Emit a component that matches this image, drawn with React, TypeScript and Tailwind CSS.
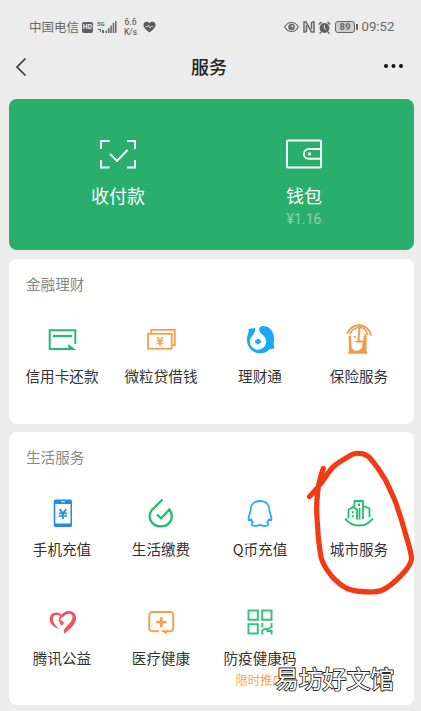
import type { ReactNode } from "react";

const CJK = `font-['Noto_Sans_CJK_SC','Noto_Sans',sans-serif]`;

export default function App() {
  return (
    <main className={`relative h-[711px] w-[421px] overflow-hidden bg-[#ececec] text-[#333] ${CJK}`}>
      <StatusBar />

      <header className="flex h-[45px] items-center justify-between pr-[17px] pl-[15px]">
        <svg width="12" height="20" viewBox="0 0 12 20" fill="none" stroke="#333" strokeWidth="1.6"><path d="M10.500 1.500 2 10l8.500 8.500" /></svg>
        <h1 className="mt-[-2px] ml-[8px] text-[18px] font-medium leading-none text-[#222]">服务</h1>
        <svg className="mt-[-2px]" width="21" height="6" viewBox="0 0 21 6" fill="#111"><circle cx="3" cy="3" r="2" /><circle cx="10.5" cy="3" r="2" /><circle cx="18" cy="3" r="2" /></svg>
      </header>

      <section className="mt-[10px] mr-[7px] ml-[9px] flex h-[151px] rounded-lg bg-[#2aae6b] pr-[17px] pl-4 text-white">
        <div className="flex w-1/2 flex-col items-center pt-[39px]">
          <svg width="38" height="32" viewBox="0 0 38 32" fill="none" stroke="#fff" strokeWidth="1.9">
            <path d="M2 11V3h8.500M28 3h8v8M36 22v7.500h-8M10.500 29.500H2V22" />
            <path d="m11 15.800 7 7L28.500 12" />
          </svg>
          <p className="mt-[12px] text-[18px] leading-[26px]">收付款</p>
        </div>
        <div className="flex w-1/2 flex-col items-center pt-[39px]">
          <svg width="38" height="32" viewBox="0 0 38 32" fill="none" stroke="#fff" strokeWidth="1.9">
            <rect x="2" y="2.500" width="34" height="27" rx="1" />
            <path d="M36 11H23.800a4.900 4.900 0 0 0 0 9.800H36" />
            <circle cx="24.500" cy="15.900" r="1.700" fill="#fff" stroke="none" />
          </svg>
          <p className="mt-[12px] text-[18px] leading-[26px]">钱包</p>
          <p className="mt-[3px] font-[Roboto,sans-serif] text-[14px] leading-[16px] tracking-[0.100px] text-[#8bd3ae]">¥1.16</p>
        </div>
      </section>

      <Panel title="金融理财" className="mt-[9px] h-[165px]">
        <Service label="信用卡还款" icon={<CardIcon />} />
        <Service label="微粒贷借钱" icon={<LoanIcon />} />
        <Service label="理财通" icon={<WealthIcon />} />
        <Service label="保险服务" icon={<InsuranceIcon />} />
      </Panel>

      <Panel title="生活服务" className="mt-2 h-[273px]">
        <Service label="手机充值" icon={<PhoneIcon />} />
        <Service label="生活缴费" icon={<UtilityIcon />} />
        <Service label="Q币充值" icon={<PenguinIcon />} />
        <Service label="城市服务" icon={<CityIcon />} />
        <Service label="腾讯公益" icon={<CharityIcon />} />
        <Service label="医疗健康" icon={<MedicalIcon />} />
        <Service label="防疫健康码" icon={<CodeIcon />} note="限时推广" />
      </Panel>

      {/* hand-drawn marker around the city services entry */}
      <svg className="pointer-events-none absolute left-0 top-0" width="421" height="711" viewBox="0 0 421 711" fill="none" stroke="#f23a14" strokeWidth="5.200" strokeLinecap="round" strokeLinejoin="round">
        <path d="M309.500 496.500C315 491 319 486 323.500 480C328 473 331 468 336 464.500C341 460.500 344 459.500 348 456.800C352 454 354 453 358.500 453.300C364 453.300 367 454.500 370 458C376 465 381 472 385.500 480C390 489 392 494 395.500 502C399 512 402 521 405 532C408 543 411 551 411.500 558C411.500 563 409 566 406 570C400 577 394 583 387 587.500C382 591 379 591.500 372 592C364 592 354 591.500 347 588.500C341 585.500 336 581 331.500 576C326 569 322.500 564 321 557C319 545 318 537 317.700 528C317 517 316 509 317 500C317.500 488 319.500 479 323.300 468.500" />
      </svg>

      <p className="absolute left-[275px] top-[663px] whitespace-nowrap text-[23.800px] font-normal leading-[29px] text-white [-webkit-text-stroke:1.800px_#2a2a2a] [paint-order:stroke_fill]">易坊好文馆</p>
    </main>
  );
}

function StatusBar() {
  return (
    <div className="flex h-11 items-center pt-[10px] pl-[29px] text-[12.500px] leading-none text-[#686868]">
      <span>中国电信</span>
      <span className="ml-[3px] flex h-[11px] w-[11px] items-center justify-center rounded-[2px] bg-[#606060] font-[Roboto,sans-serif] text-[7px] font-bold text-[#eee]">HD</span>
      <svg className="ml-1" width="20" height="14" viewBox="0 0 20 14" fill="#666">
        <text x="0" y="6" fontSize="6" fontWeight="700" fontFamily="Roboto">5G</text>
        <path d="M1 9h3v3H3v-2H1zM5 10h2v3H5zM8.500 10.500h1.500V13H8.500zM11 8h1.500v5H11zM13.300 5.500h1.500V13h-1.500zM15.700 3h1.500v10h-1.500zM18 1h1.500v12H18z" />
      </svg>
      <span className="ml-[6px] flex w-[15px] flex-col items-center font-[Roboto,sans-serif] text-[8.500px] font-medium leading-[10px]"><span>6.6</span><span>K/s</span></span>
      <svg className="ml-[5px]" width="13" height="12" viewBox="0 0 13 12">
        <path d="M6.500 11.500C1 7.500.5 5.600.5 3.800.5.200 5 0 6.500 2.200 8 0 12.500.2 12.500 3.800c0 1.800-.5 3.700-6 7.700Z" fill="#5c5c5c" />
        <path d="M2.500 5.500h2l1-1.500 1.500 3 1-1.500h2" fill="none" stroke="#ececec" strokeWidth=".8" />
      </svg>
      <svg className="ml-[128px]" width="15" height="12" viewBox="0 0 15 12" fill="none" stroke="#666" strokeWidth="1.200">
        <path d="M.8 6c3-6 10.400-6 13.400 0-3 6-10.400 6-13.400 0Z" /><circle cx="7.500" cy="6" r="2.700" fill="#777" /><circle cx="8.300" cy="5.100" r=".9" fill="#ececec" stroke="none" />
      </svg>
      <svg className="ml-1" width="12" height="12" viewBox="0 0 12 12" fill="none" stroke="#666" strokeWidth="1.500">
        <path d="M3 11H1V1h2l5.500 10H11V1H9M3.500 4v7M8.500 1v7" />
      </svg>
      <svg className="ml-[3px]" width="13" height="13" viewBox="0 0 13 13">
        <circle cx="6.500" cy="7" r="4.900" fill="#606060" />
        <path d="M.8 3.500 3.500 1M12.200 3.500 9.500 1M3 11l-1.300 1.500M10 11l1.300 1.500" stroke="#606060" strokeWidth="1.500" />
        <path d="M6.300 4v3.300l2.200 1.500" fill="none" stroke="#ececec" strokeWidth="1" />
      </svg>
      <span className="ml-[4px] flex h-[12px] w-[20px] items-center justify-center rounded-[3px] border border-[#666] bg-[#d0d0d0] font-[Roboto,sans-serif] text-[9.500px] font-bold">89</span>
      <span className="ml-px h-[6px] w-[1.500px] bg-[#666]" />
      <span className="ml-[4px] font-[Roboto,sans-serif] text-[13.200px]">09:52</span>
    </div>
  );
}

function Panel({ title, className, children }: { title: string; className: string; children: ReactNode }) {
  return (
    <section className={`ml-[9px] w-[405px] rounded-lg bg-white pt-[15px] ${className}`}>
      <h2 className="pl-[17px] text-[14.600px] font-normal leading-[20px] text-[#888]">{title}</h2>
      <div className="mt-[28px] ml-[3.500px] grid w-[396px] grid-cols-4">{children}</div>
    </section>
  );
}

function Service({ label, icon, note }: { label: string; icon: ReactNode; note?: string }) {
  return (
    <div className="flex h-[109px] flex-col items-center whitespace-nowrap">
      <svg width="36" height="36" viewBox="0 0 36 36" fill="none">{icon}</svg>
      <p className="mt-[6.500px] text-[14.600px] leading-[22px] text-[#333]">{label}</p>
      {note && <p className="mt-[3px] text-[12.300px] leading-[17px] text-[#f5a55b]">{note}</p>}
    </div>
  );
}

function CardIcon() {
  return (
    <>
      <path d="M31.300 22V8.300H5.700v18.800H28" stroke="#20be6b" strokeWidth="2" />
      <path d="M9 14h19" stroke="#20be6b" strokeWidth="2.200" />
      <path d="M24.300 22v6.100h7.900Z" fill="#20be6b" />
    </>
  );
}

function LoanIcon() {
  return (
    <g stroke="#f3a04d" strokeWidth="1.800">
      <path d="M8.200 11V7.800h23.600v15.400H29" />
      <rect x="5" y="11.800" width="23.700" height="14.900" />
      <path d="m14 15 3 3.500 3-3.500M13.700 19h6.600M13.700 21.500h6.600M17 18v6.300" strokeWidth="1.400" />
    </g>
  );
}

function WealthIcon() {
  return (
    <>
      <path d="M13.500 5.800C11 6.500 8.500 6.600 6.500 7.200c.4 1.600.3 2.600-.3 4C2 21 8.300 31.300 18.300 31.300c4 0 7-1.400 9.500-4.300l4.900-.5-1.200-4.600C33.500 14 30.500 7 24.500 4.600c-3-1.100-6-.6-7.500 1.700Z" fill="#1aa8fa" />
      <path d="M12.800 4.500c.8 4-.1 6.500-2.300 8.500l10.500.5c-3.500-2.600-4.300-5.200-3.500-9Z" fill="#fff" />
      <circle cx="16" cy="19.500" r="8.200" fill="#fff" />
      <path d="M16 16.700v5.600M13.200 19.500h5.600" stroke="#1aa8fa" strokeWidth="2.800" />
    </>
  );
}

function InsuranceIcon() {
  return (
    <>
      <path d="M7.500 14h18v14.500l1 3.200H7l1.200-4Z" fill="#f09b47" />
      <path d="M9.500 14c.5-3.500 6.500-4 7.500 0v5h-3.500c1 2 4.500 2 8 1.200v3.500c-.8 3.300-3.500 5-7 5-3-.5-4.500-3.500-4-7Z" fill="#fff" />
      <path d="M18.300 11h4.200v7.500h-4.200z" fill="#fff" />
      <g stroke="#f09b47">
        <path d="M6.300 11.500C10 .500 27 0 30 13.500" strokeWidth="2" />
        <path d="M9 12c2.500-6.500 7-6.500 10-6.500 4 0 6.500 3 7.500 7.500" strokeWidth="1.600" />
        <path d="M18.800 3 17.300 20" strokeWidth="1.900" />
        <path d="M24.300 12v16M8.800 13.500V29" strokeWidth="1.800" />
      </g>
      <circle cx="13.800" cy="14.800" r="1.100" fill="#f09b47" />
    </>
  );
}

function PhoneIcon() {
  return (
    <>
      <rect x="9.700" y="4.500" width="18.300" height="27.500" rx="1.800" fill="#218bea" />
      <path d="M11.300 9h15.200v19.500H11.300z" fill="#fff" />
      <path d="M17 6.700h4" stroke="#fff" strokeWidth="1" />
      <path d="m15.500 14 3.400 4.300 3.400-4.300M14.800 18.300h8.200M14.800 21h8.200M18.900 18v6" stroke="#218bea" strokeWidth="1.700" />
    </>
  );
}

function UtilityIcon() {
  return (
    <path d="m14 19.500 4 4 8.500-9.200c3 5 2.900 9.200.4 12.700-3.900 5.800-13.800 6-18.100.2-3.100-4.200-2.500-9 .5-12.600L19.500 4.500" stroke="#20be6b" strokeWidth="2.300" strokeLinejoin="round" />
  );
}

function PenguinIcon() {
  return (
    <path d="M18 6c-6 0-9.300 3.500-9.300 9-.5 3.500-2.500 6-2 10 .2.900 1.600.3 2.400-.7.500 1.400 1 2.200 1.900 3-3 2.700-.5 3.700 2.500 3.700 2 0 3.500-.5 4.500-1.300 1 .8 2.500 1.300 4.500 1.300 3 0 5.500-1 2.500-3.700.9-.8 1.400-1.600 1.900-3 .8 1 2.200 1.600 2.400.7.500-4-1.500-6.500-2-10C27.300 9.500 24 6 18 6Z" stroke="#2eaaf7" strokeWidth="1.800" strokeLinejoin="round" />
  );
}

function CityIcon() {
  return (
    <g stroke="#20be6b" strokeWidth="1.800" strokeLinejoin="round">
      <path d="M4.200 23.500c6.500 9.300 21 9.300 27.600 0" strokeWidth="2" />
      <path d="M7.500 23.500v-9l4.700-2.500 3.800 2.500v10.200M13.500 11.500V6h8.500v18M22 11l6.500 2.500V22M18.500 13v11.500" />
      <path d="M11.800 16.300v2M11.800 20.300v2M18 8.500v2.700" strokeWidth="2" />
    </g>
  );
}

function CharityIcon() {
  return (
    <>
      <path d="M15 25C8 22.500 3.800 17.500 6.300 12c2-4.500 8.500-4.300 11.200-1.300C20 7 25.500 5.800 29 8c5 3.500 4 11-3.200 17l-5.500 4.700c-1.300-3 0-5 2.200-7.200 4.700-4.500 7-8.500 5.500-11.500-1.800-2.500-6.500-1.500-9.500 2.500l-1.500-.8C14.500 9.800 10.500 10 9.200 13c-1.300 4 1.800 8 5.800 12Z" fill="#ef5560" />
      <path d="M18 11.500c-2.800 2.500-3.500 5.300-.3 6.800" stroke="#ef5560" strokeWidth="1.800" />
      <circle cx="17.800" cy="19" r="2" fill="#ef5560" />
    </>
  );
}

function MedicalIcon() {
  return (
    <>
      <path d="M16 27.200H9.300a3 3 0 0 1-3-3V11a3 3 0 0 1 3-3h17.900a3 3 0 0 1 3 3v13.200a3 3 0 0 1-3 3h-4" stroke="#f5a24f" strokeWidth="2" />
      <path d="M18.300 13.200v10M13.300 18.200h10" stroke="#f5a24f" strokeWidth="2.800" />
      <path d="M18.500 26.200h7l-3.200 4.300c-.6-2-1.600-2.800-3.800-2.800Z" fill="#f5a24f" />
    </>
  );
}

function CodeIcon() {
  return (
    <g stroke="#36c279" strokeWidth="2">
      <path d="M6.500 6.500h9.300v9.300H6.500zM20.200 6.500h9.300v9.300h-9.300zM6.500 20.200h9.300v9.300H6.500z" />
      <path d="M20.300 19v4.500M20.300 26v4.500M19.500 27l3-2h3.500l3.500-2M29.500 19v5M29.500 25.500v5M24.500 27h5" />
    </g>
  );
}
